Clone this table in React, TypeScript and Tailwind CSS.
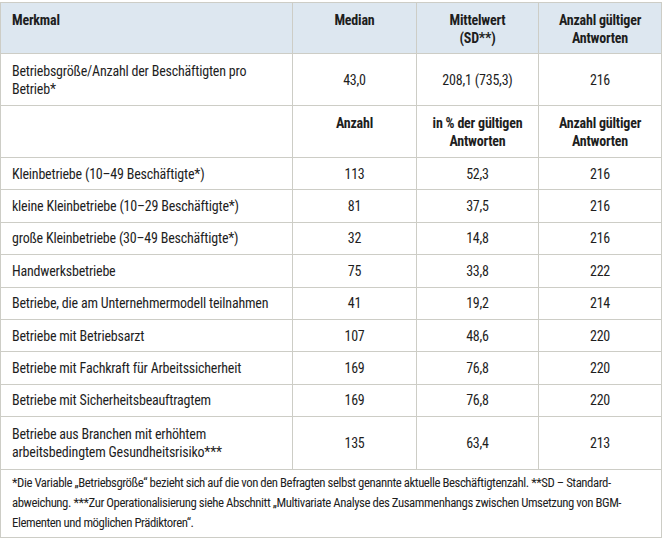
import React from "react";

const rows: [string, string, string, string][] = [
  ["Kleinbetriebe (10–49 Beschäftigte*)", "113", "52,3", "216"],
  ["kleine Kleinbetriebe (10–29 Beschäftigte*)", "81", "37,5", "216"],
  ["große Kleinbetriebe (30–49 Beschäftigte*)", "32", "14,8", "216"],
  ["Handwerksbetriebe", "75", "33,8", "222"],
  ["Betriebe, die am Unternehmermodell teilnahmen", "41", "19,2", "214"],
  ["Betriebe mit Betriebsarzt", "107", "48,6", "220"],
  ["Betriebe mit Fachkraft für Arbeitssicherheit", "169", "76,8", "220"],
  ["Betriebe mit Sicherheitsbeauftragtem", "169", "76,8", "220"],
];

const font = {
  fontFamily: '"Roboto Condensed", "DejaVu Sans Condensed", sans-serif',
};

export default function App() {
  const cell = "border border-[#cdcdc6] px-[11px] whitespace-nowrap";
  return (
    <div className="w-[662px] h-[546px] bg-white pt-[2px] text-[#1e1e1e]" style={font}>
      <table className="w-[661px] border-collapse table-fixed text-[14px] leading-[18px] tracking-[-0.2px]">
        <colgroup>
          <col className="w-[292px]" />
          <col className="w-[124px]" />
          <col className="w-[122px]" />
          <col className="w-[123px]" />
        </colgroup>
        <tbody>
          <tr className="h-[51px] bg-[#dde7f0] font-bold align-top">
            <td className={`${cell} pt-[8px]`}>Merkmal</td>
            <td className={`${cell} pt-[8px] text-center`}>Median</td>
            <td className={`${cell} pt-[8px] text-center`}>
              Mittelwert
              <br />
              (SD**)
            </td>
            <td className={`${cell} pt-[8px] text-center`}>
              Anzahl gültiger
              <br />
              Antworten
            </td>
          </tr>
          <tr className="h-[52px]">
            <td className={`${cell} align-top pt-[8px]`}>
              Betriebsgröße/Anzahl der Beschäftigten pro
              <br />
              Betrieb*
            </td>
            <td className={`${cell} text-center`}>43,0</td>
            <td className={`${cell} text-center`}>208,1 (735,3)</td>
            <td className={`${cell} text-center`}>216</td>
          </tr>
          <tr className="h-[52px] font-bold align-top">
            <td className={`${cell}`}></td>
            <td className={`${cell} pt-[8px] text-center`}>Anzahl</td>
            <td className={`${cell} pt-[8px] text-center`}>
              in % der gültigen
              <br />
              Antworten
            </td>
            <td className={`${cell} pt-[8px] text-center`}>
              Anzahl gültiger
              <br />
              Antworten
            </td>
          </tr>
          {rows.map((r, i) => (
            <tr key={i} className="h-[32.4px]">
              <td className={cell}>{r[0]}</td>
              <td className={`${cell} text-center`}>{r[1]}</td>
              <td className={`${cell} text-center`}>{r[2]}</td>
              <td className={`${cell} text-center`}>{r[3]}</td>
            </tr>
          ))}
          <tr className="h-[53px]">
            <td className={cell}>
              Betriebe aus Branchen mit erhöhtem
              <br />
              arbeitsbedingtem Gesundheitsrisiko***
            </td>
            <td className={`${cell} text-center`}>135</td>
            <td className={`${cell} text-center`}>63,4</td>
            <td className={`${cell} text-center`}>213</td>
          </tr>
          <tr className="h-[68px]">
            <td colSpan={4} className={`${cell} text-[12.8px] leading-[20px] tracking-[-0.45px] pb-[2px]`}>
              *Die Variable „Betriebsgröße“ bezieht sich auf die von den Befragten selbst genannte aktuelle Beschäftigtenzahl. **SD – Standard-
              <br />
              abweichung. ***Zur Operationalisierung siehe Abschnitt „Multivariate Analyse des Zusammenhangs zwischen Umsetzung von BGM-
              <br />
              Elementen und möglichen Prädiktoren“.
            </td>
          </tr>
        </tbody>
      </table>
    </div>
  );
}
